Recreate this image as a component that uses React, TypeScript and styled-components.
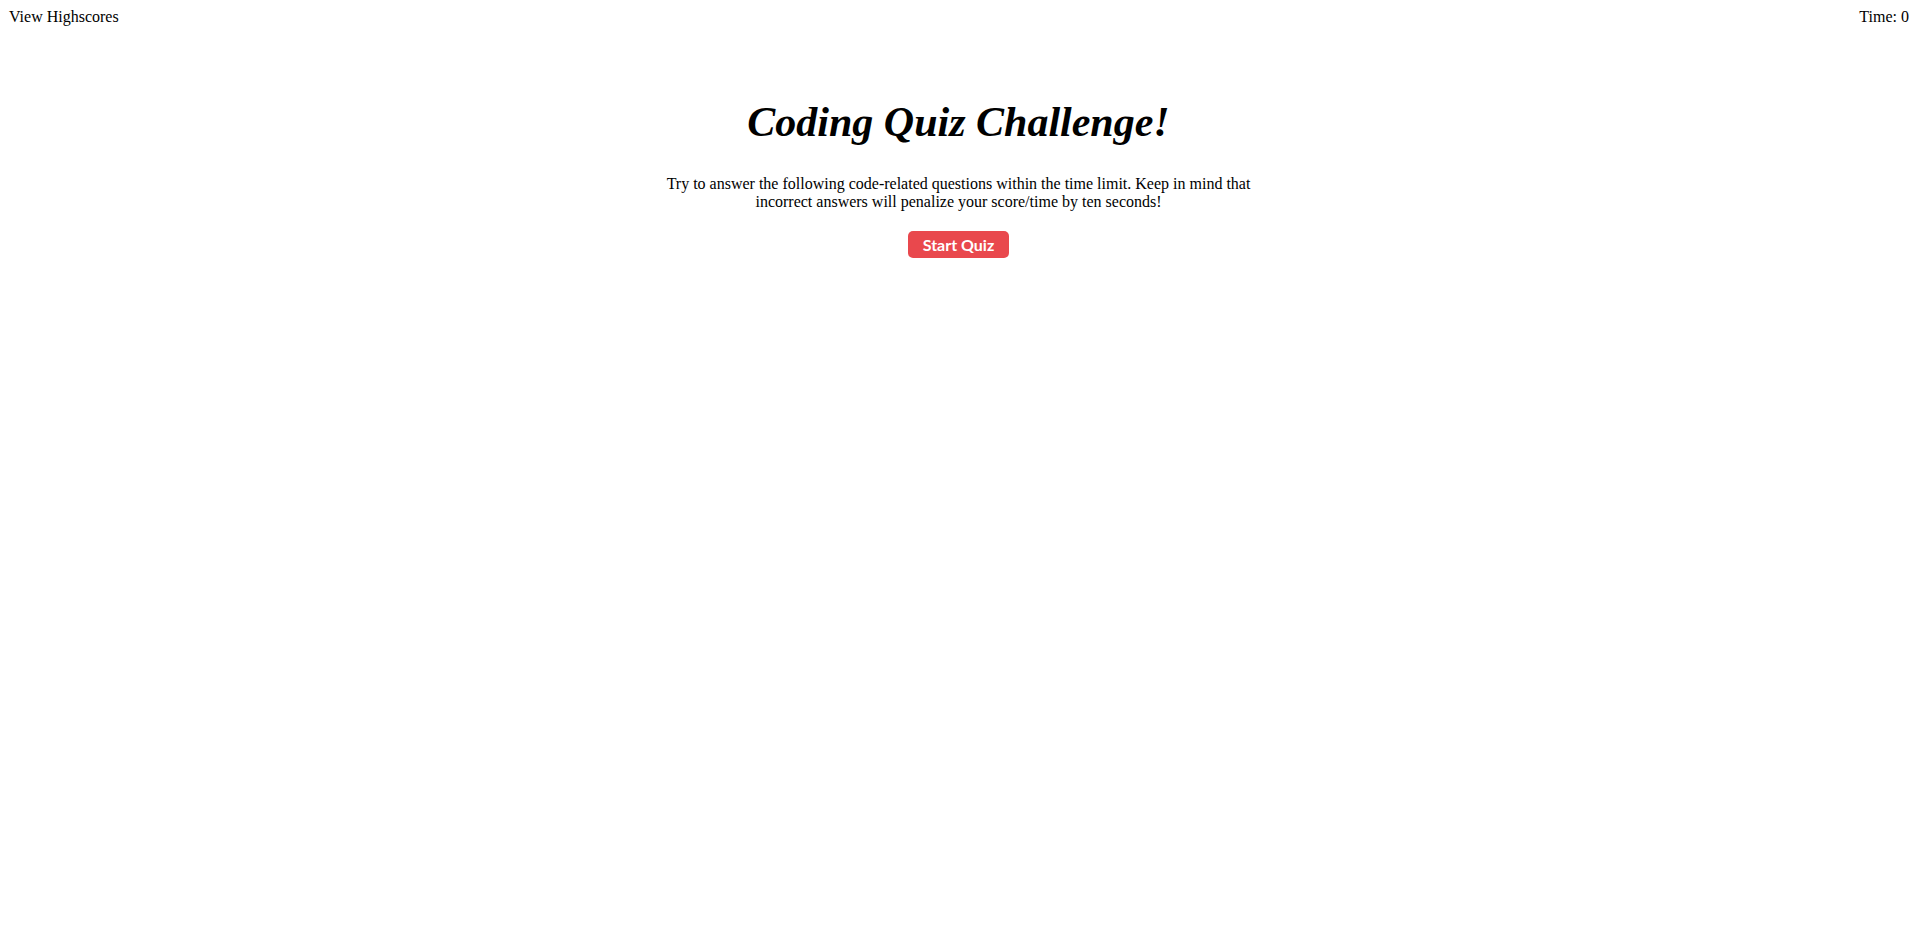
import styled, { createGlobalStyle } from 'styled-components';

const GlobalStyle = createGlobalStyle`
  html, body {
    margin: 0;
    padding: 0;
    background: #ffffff;
  }
  body {
    margin: 8px 11px 8px 8px;
    font-family: "Liberation Serif", "Times New Roman", serif;
    font-size: 16px;
    color: #000000;
  }
`;

const Header = styled.header`
  display: flex;
  flex-direction: row;
  justify-content: space-between;
  align-items: center;
  padding-left: 1px;
  line-height: 18px;
`;

const HeaderLink = styled.a`
  color: #000000;
  text-decoration: none;
  cursor: pointer;
`;

const Timer = styled.div`
  color: #000000;
`;

const Main = styled.main`
  display: flex;
  flex-direction: column;
  align-items: center;
  text-align: center;
`;

const Title = styled.h1`
  margin: 72px 0 0 0;
  font-size: 42px;
  font-style: italic;
  font-weight: bold;
  line-height: 48px;
`;

const Intro = styled.p`
  max-width: 620px;
  margin: 29px 0 0 0;
  line-height: 18px;
`;

const StartButton = styled.button`
  margin-top: 20px;
  padding: 2px 15px;
  height: 27px;
  border: none;
  border-radius: 5px;
  background: #e9484d;
  color: #ffffff;
  font-family: "Comic Sans MS", "Lato", "DejaVu Sans", sans-serif;
  font-weight: bold;
  font-size: 16px;
  cursor: pointer;
`;

export default function App() {
  return (
    <>
      <GlobalStyle />
      <Header>
        <HeaderLink>View Highscores</HeaderLink>
        <Timer>Time: 0</Timer>
      </Header>
      <Main>
        <Title>Coding Quiz Challenge!</Title>
        <Intro>
          Try to answer the following code-related questions within the time
          limit. Keep in mind that incorrect answers will penalize your
          score/time by ten seconds!
        </Intro>
        <StartButton>Start Quiz</StartButton>
      </Main>
    </>
  );
}
